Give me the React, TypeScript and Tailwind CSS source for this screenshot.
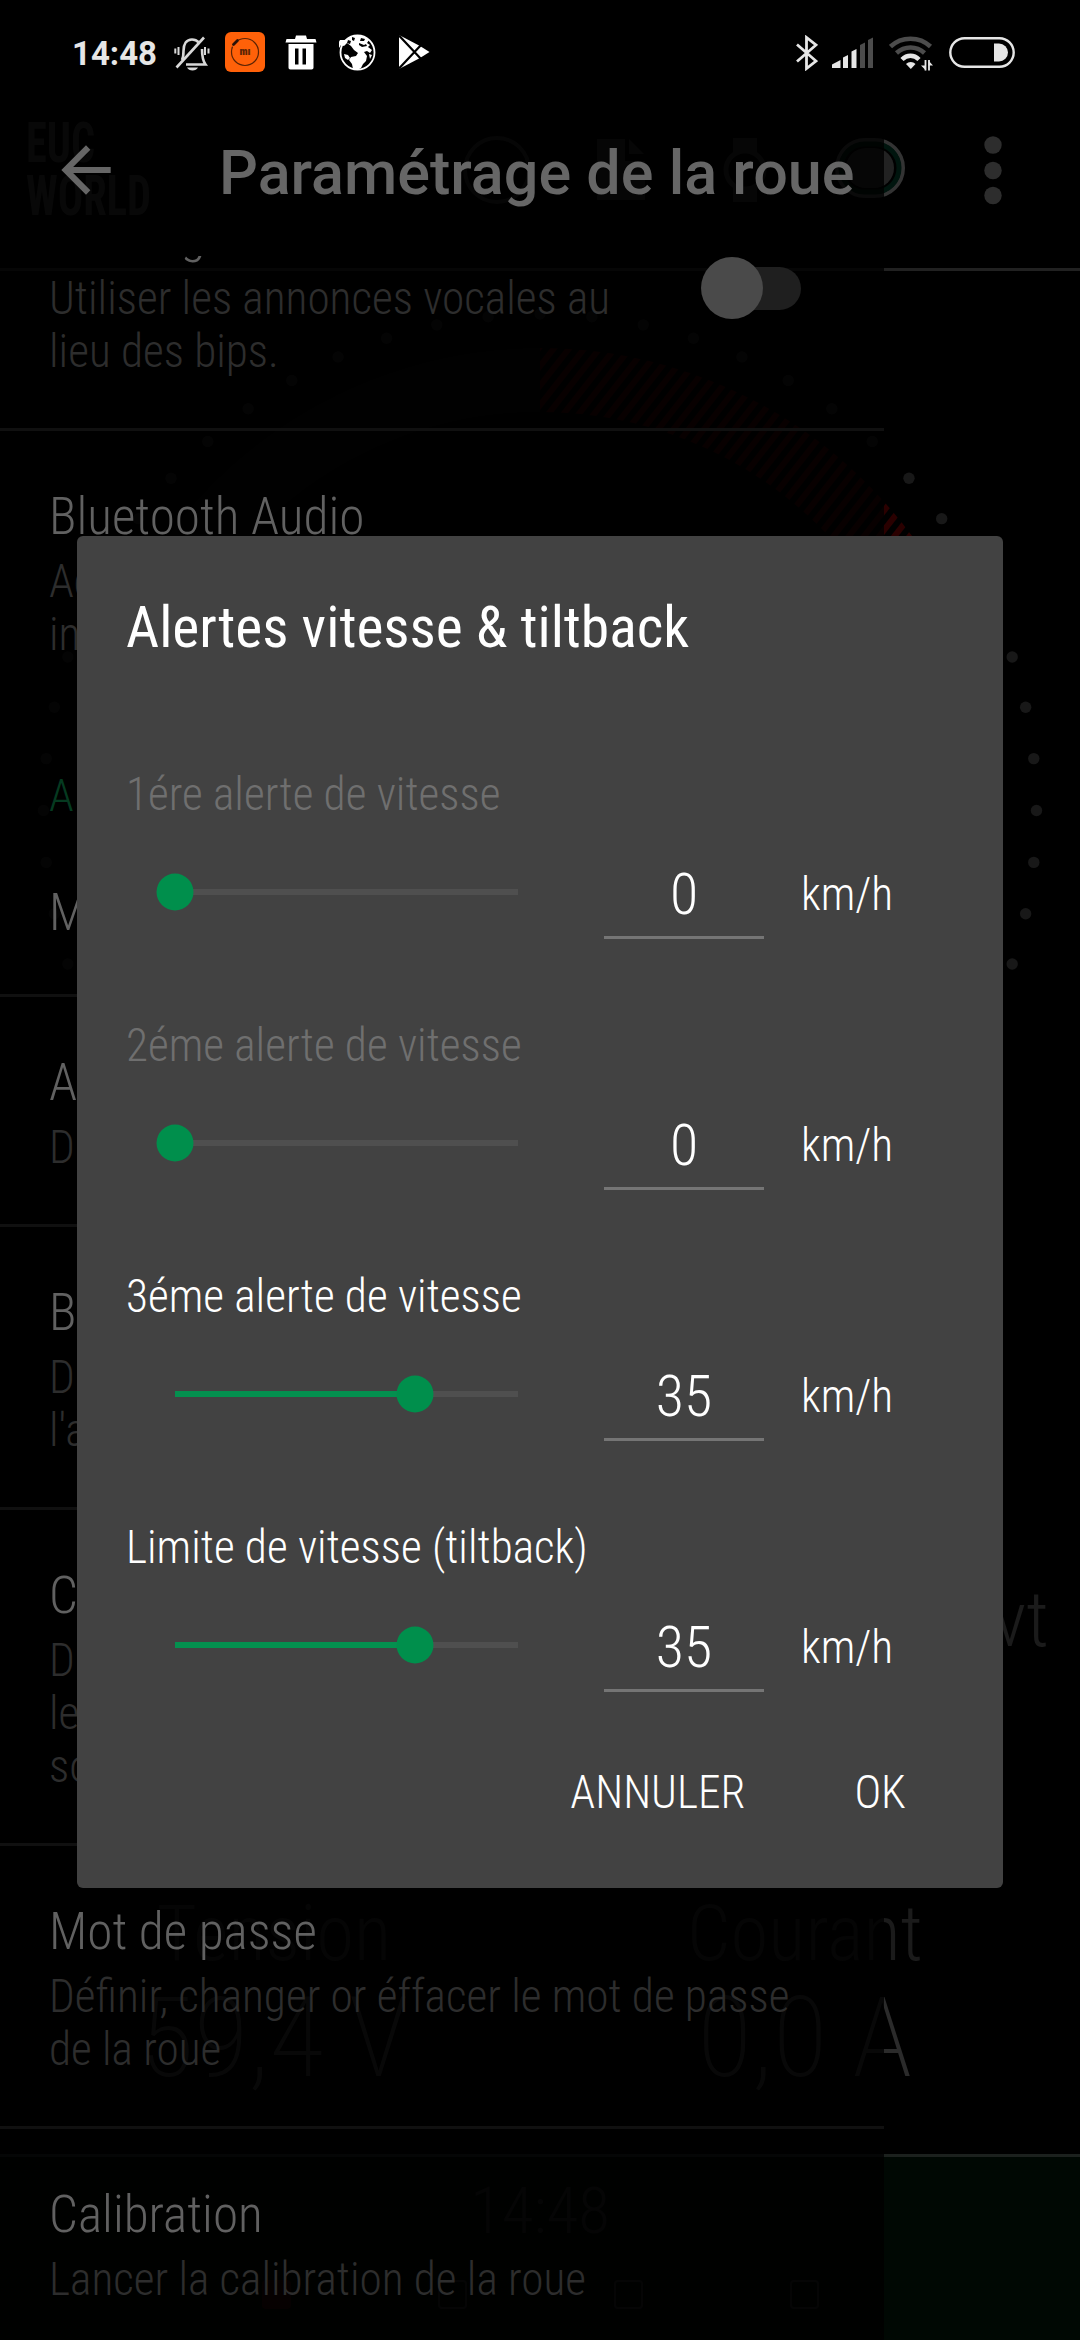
import { MdArrowBack } from "react-icons/md";

interface PrefRowProps {
  title: string;
  summary?: string[];
  divider?: boolean;
}

interface AlertRowProps {
  label: string;
  value: number;
  disabled?: boolean;
}

const MAX_SPEED = 50;

const alerts: AlertRowProps[] = [
  { label: "1ére alerte de vitesse", value: 0, disabled: true },
  { label: "2éme alerte de vitesse", value: 0, disabled: true },
  { label: "3éme alerte de vitesse", value: 35 },
  { label: "Limite de vitesse (tiltback)", value: 35 },
];

function StatusBar() {
  return (
    <div className="relative flex h-[104px] items-center pl-[72px] pr-[65px] font-['Roboto',sans-serif] text-[#e6e6e6]">
      <span className="mt-[3px] w-[102px] text-[33px] font-bold leading-[40px] [font-stretch:100%]">14:48</span>
      <svg width="36" height="36" viewBox="0 0 36 36" className="mt-1" fill="none" stroke="#d8d8d8" strokeWidth="2.600">
        <path d="M8 24c1-2 1.500-5 1.500-9C9.500 8 12.500 3.500 18 3.500c3 0 5 1 7 3M28 13c0 9 1 12 3.500 15.500H12" />
        <path d="M30 1.500 2.500 31.500" />
        <path d="M4.500 11v8M1.300 12.500v5M31 11v8M34.500 12.500v5" strokeWidth="2" />
        <path d="M13 31.500h11c-1 2-3 3-5.500 3s-4.500-1-5.500-3z" fill="#d8d8d8" stroke="none" />
      </svg>
      <svg width="40" height="40" viewBox="0 0 40 40" className="ml-[15px]">
        <rect width="40" height="40" rx="6" fill="#ff6109" />
        <circle cx="20" cy="20" r="13.500" fill="none" stroke="#5b2405" strokeWidth="1.200" />
        <path d="M6.500 13.500 13 7.500" stroke="#ff6109" strokeWidth="7" />
        <path d="M8.500 12.500 12.500 8.500" stroke="#2a1208" strokeWidth="2.800" strokeLinecap="round" />
        <text x="20" y="23" fontSize="11" fontWeight="900" textAnchor="middle" fill="#5e2404">mı</text>
      </svg>
      <svg width="32" height="35" viewBox="0 0 32 35" className="ml-5" fill="#fff">
        <path d="M1.500 4H10l1-3.500h10L22 4h8.500l1 3.500H.5z" />
        <path fillRule="evenodd" d="M3.500 9h25v23.500c0 1.300-.7 2-2 2h-21c-1.300 0-2-.7-2-2zM10 13.500v16h3.500v-16zm7.500 0v16H21v-16z" />
      </svg>
      <svg width="37" height="37" viewBox="0 0 37 37" className="ml-[22px]">
        <circle cx="18.500" cy="18.500" r="17" fill="#000" stroke="#fff" strokeWidth="1.800" />
        <path fill="#fff" d="M8 6c3-3 7-4.500 10.500-4.500C23 1.500 27 3 30 6l-2 3 3 2-2 2 4 3-2 3-3-2-3 1 3 4-1 5-3 3-2 4-4 2-4-1-1-5-3-4 2-3 5-1 2-3-4-3-3-4-4-3-3 3-3-1-2 3-3 1 1-4 3-5z" />
        <path fill="#000" d="M9 6l3 1-1 3-3-1zM13 3l3 1-1 3-2-1zM22 4l4 1-1 2-4 0zM20 9l5 2 2-1 1 2-5 1-3-2z" />
        <path fill="#fff" d="M5 20l4 1 2 3-2 2-3-2zM30 20l3 1-2 4z" />
      </svg>
      <svg width="32" height="34" viewBox="0 0 32 34" className="ml-[22px]" fill="#fff">
        <path d="M1 0 22 11l9.500 6L22 23 1 34z" />
        <path d="M1 .5 24 25M1 33.500 24 9" stroke="#000" strokeWidth="2.200" />
      </svg>

      <div className="ml-auto flex items-center pt-[2px]">
        <svg width="22" height="36" viewBox="0 0 22 36" fill="none" stroke="#e6e6e6" strokeWidth="2.800">
          <path d="M1 9.500 20 26 10.500 33.500V2.500L20 10 1 26.500" />
        </svg>
        <svg width="42" height="31" viewBox="0 0 42 31" className="ml-[14px] -mt-px">
          <path d="M0 31v-3.500L8.500 23v8z" fill="#e6e6e6" />
          <path d="M11 31V20.500l5-2.500v13zM19.500 31V14.500l5-2.500v19z" fill="#e6e6e6" />
          <path d="M28 31V8l5-2.500V31zM36 31V3l5-2.500V31z" fill="#4c4c4c" />
        </svg>
        <svg width="44" height="35" viewBox="0 0 44 35" className="ml-[15px] mt-px" fill="none">
          <path d="M1.500 10.500c11-10.500 29-10.500 40 0" stroke="#4c4c4c" strokeWidth="4.500" />
          <path d="M7.500 17c8-7.500 20-7.500 28 0" stroke="#4c4c4c" strokeWidth="4.500" />
          <path d="M13 23.500c5-5 12-5 17 0" stroke="#e6e6e6" strokeWidth="4.500" />
          <path d="M17 28c2.500-2.700 7-2.700 9.500 0l-4.700 5z" fill="#e6e6e6" />
          <path d="M36.500 24v10.500M40 24v10.500" stroke="#e6e6e6" strokeWidth="1.800" />
          <path d="M32 29.500h5v5zM44 29.500h-4.500v-5z" fill="#e6e6e6" />
        </svg>
        <svg width="66" height="31" viewBox="0 0 66 31" className="ml-4 -mt-px" fill="none">
          <rect x="1.300" y="1.300" width="63.400" height="28.400" rx="14.200" stroke="#e6e6e6" strokeWidth="2.400" />
          <path d="M45 6.500h5a9 9 0 0 1 0 18h-5z" fill="#e6e6e6" />
        </svg>
      </div>
    </div>
  );
}

/* speedometer ring: dots every 6 degrees and the hatched red zone */
function Gauge() {
  const dots = Array.from({ length: 37 }, (_, i) => ((i * 6 - 18) * Math.PI) / 180);
  return (
    <svg width="1080" height="1220" viewBox="0 271 1080 1220" className="block">
      <defs>
        <pattern id="hatch" width="12" height="12" patternUnits="userSpaceOnUse" patternTransform="rotate(38)">
          <rect width="6" height="12" fill="#2a0000" />
        </pattern>
      </defs>
      <path d="M110 810A430 430 0 0 1 540 380" fill="none" stroke="#070707" strokeWidth="64" />
      <path d="M540 380A430 430 0 0 1 970 810" fill="none" stroke="url(#hatch)" strokeWidth="64" />
      {dots.map((a, i) => (
        <circle key={i} cx={540 + 496.5 * Math.cos(a)} cy={810.5 - 496.5 * Math.sin(a)} r="5.700" fill="#181818" />
      ))}
    </svg>
  );
}

function Dashboard() {
  return (
    <div className="absolute inset-0 flex flex-col overflow-hidden text-[#1b1b1b]">
      <div className="flex h-[268px] shrink-0 items-start pt-[117px] text-[#2b2b2b]">
        <div className="ml-[26px] w-[437px] origin-left scale-x-[0.77] text-[55px] font-bold leading-[53px]">
          <div>EUC</div>
          <div>WORLD</div>
        </div>
        <svg width="617" height="110" viewBox="463 117 617 110" fill="none">
          <circle cx="497" cy="170" r="32" stroke="#202020" strokeWidth="4" />
          <path d="M597 139h28v22h20v39h-48z" fill="#202020" />
          <path d="M629 139l15 15h-15z" fill="#202020" />
          <path d="M733 138h24v15h-24zM733 187h24v15h-24z" fill="#202020" />
          <circle cx="745" cy="170" r="19" stroke="#202020" strokeWidth="5" />
          <rect x="837" y="140" width="66" height="56" rx="28" stroke="#333" strokeWidth="4" />
          <rect x="841" y="144" width="58" height="48" rx="24" stroke="#00150e" strokeWidth="5" />
          <rect x="846" y="148" width="48" height="40" rx="20" fill="#222" />
          <circle cx="993" cy="145" r="8.700" fill="#2d2d2d" />
          <circle cx="993" cy="170.500" r="8.700" fill="#2d2d2d" />
          <circle cx="993" cy="195.500" r="8.700" fill="#2d2d2d" />
        </svg>
      </div>
      <div className="h-[3px] shrink-0 bg-[#212121]" />
      <Gauge />
      <div className="flex h-[397px] shrink-0 justify-end pr-[31px] pt-[84px] text-[78px] font-light leading-[90px]">vt</div>
      <div className="flex h-[266px] shrink-0">
        <div className="flex w-[548px] flex-col items-center font-light">
          <span className="text-[77px] leading-[92px]">Tension</span>
          <span className="text-[112px] font-extralight leading-[116px] text-[#2b2b2b]">59,4 V</span>
        </div>
        <div className="flex w-[514px] flex-col items-center font-light">
          <span className="text-[77px] leading-[92px]">Courant</span>
          <span className="text-[112px] font-extralight leading-[116px] text-[#2b2b2b]">0,0 A</span>
        </div>
      </div>
      <div className="flex grow flex-col items-center border-t-[3px] border-[#1c211e] bg-[#000803]">
        <span className="mt-[15px] text-[65px] font-light leading-[78px]">14:48</span>
        <div className="mt-[30px] flex gap-[147px]">
          <div className="size-[29px] rounded bg-[#200606]" />
          <div className="size-[29px] rounded border-2 border-[#1c1c1c]" />
          <div className="size-[29px] rounded border-2 border-[#1c1c1c]" />
          <div className="size-[29px] rounded border-2 border-[#1c1c1c]" />
        </div>
      </div>
    </div>
  );
}

function PrefRow({ title, summary = [], divider = true }: PrefRowProps) {
  return (
    <div className={divider ? "border-b-[3px] border-[#101010] pl-[49px] pt-[55px] pb-[51px]" : "pl-[49px] pt-[55px] pb-[51px]"}>
      <div className="text-[51.200px] leading-[61px] text-[#616161]">{title}</div>
      {summary.length > 0 && (
        <div className="-mb-px mt-[8px] text-[45.300px] leading-[53px] text-[#2d2d2d]">
          {summary.map((line, i) => (
            <div key={i}>{line}</div>
          ))}
        </div>
      )}
    </div>
  );
}

function Settings() {
  return (
    <div className="relative flex h-[2236px] w-[884px] flex-col whitespace-nowrap font-light">
      <div className="flex h-[152px] shrink-0 items-center pb-5 pl-[49px] text-[#666]">
        <MdArrowBack size={74} />
        <h1 className="ml-[96px] mt-[6px] font-['Roboto',sans-serif] text-[61.100px] font-medium leading-[70px] [font-stretch:100%]">
          Paramétrage de la roue
        </h1>
      </div>
      <div className="grow overflow-hidden">
        <div className="relative -mt-[108px]">
          <PrefRow title="Messages vocaux" summary={["Utiliser les annonces vocales au", "lieu des bips."]} />
          <div className="absolute right-[83px] top-[108px] flex h-[64px] w-[100px] items-center">
            <div className="ml-[29px] h-[43px] w-[71px] rounded-full bg-[#1f1f1f]" />
            <div className="absolute left-0 size-[62px] rounded-full bg-[#4a4a4a]" />
          </div>
        </div>
        <PrefRow title="Bluetooth Audio" summary={["Ac", "in"]} divider={false} />
        <div className="pl-[49px] pt-[58px] text-[45px] leading-[53px] text-[#053a20]">A</div>
        <div className="pt-[5px]">
          <PrefRow title="M" />
        </div>
        <PrefRow title="A" summary={["D"]} />
        <PrefRow title="B" summary={["D", "l'a"]} />
        <PrefRow title="C" summary={["D", "le", "so"]} />
        <PrefRow title="Mot de passe" summary={["Définir, changer or éffacer le mot de passe", "de la roue"]} />
        <PrefRow title="Calibration" summary={["Lancer la calibration de la roue"]} />
      </div>
    </div>
  );
}

function AlertRow({ label, value, disabled }: AlertRowProps) {
  const percent = `${(value / MAX_SPEED) * 100}%`;
  return (
    <div className="h-[251px]">
      <div className={disabled ? "text-[45.300px] leading-[55px] text-[#6f6f6f]" : "text-[45.300px] leading-[55px] text-white"}>{label}</div>
      <div className="flex">
        <div className="relative ml-[49px] mt-[67px] h-[6px] w-[343px] bg-[#4f4f4f]">
          <div className="h-full bg-[#04904f]" style={{ width: percent }} />
          <div className="absolute top-1/2 size-[37px] -translate-x-1/2 -translate-y-1/2 rounded-full bg-[#008f4c]" style={{ left: percent }} />
        </div>
        <div className="ml-[86px] mt-[38px] h-[79px] w-[160px] border-b-[3px] border-[#757575] text-center text-[58px] leading-[68px]">{value}</div>
        <span className="ml-[37px] mt-[46px] text-[45.300px] leading-[53px]">km/h</span>
      </div>
    </div>
  );
}

function AlertDialog() {
  return (
    <div className="absolute inset-0 flex items-start pl-[77px] pt-[536px]">
      <div className="h-[1352px] w-[926px] rounded-[6px] bg-[#424242] pl-[49px] pt-[57px] font-light text-white">
        <h2 className="text-[57.500px] font-normal leading-[70px]">Alertes vitesse &amp; tiltback</h2>
        <div className="mt-[104px]">
          {alerts.map((alert) => (
            <AlertRow key={alert.label} {...alert} />
          ))}
        </div>
        <div className="-mt-[5px] flex justify-end gap-[109px] pr-[97px] text-[45.300px] leading-[53px]">
          <button>ANNULER</button>
          <button>OK</button>
        </div>
      </div>
    </div>
  );
}

export default function App() {
  return (
    <div className="relative h-[2340px] w-[1080px] overflow-hidden bg-black font-['Roboto_Condensed','Roboto',sans-serif] [font-stretch:75%]">
      <Dashboard />
      <div className="absolute inset-y-0 left-0 w-[884px] bg-black/80" />
      <StatusBar />
      <Settings />
      <AlertDialog />
    </div>
  );
}
